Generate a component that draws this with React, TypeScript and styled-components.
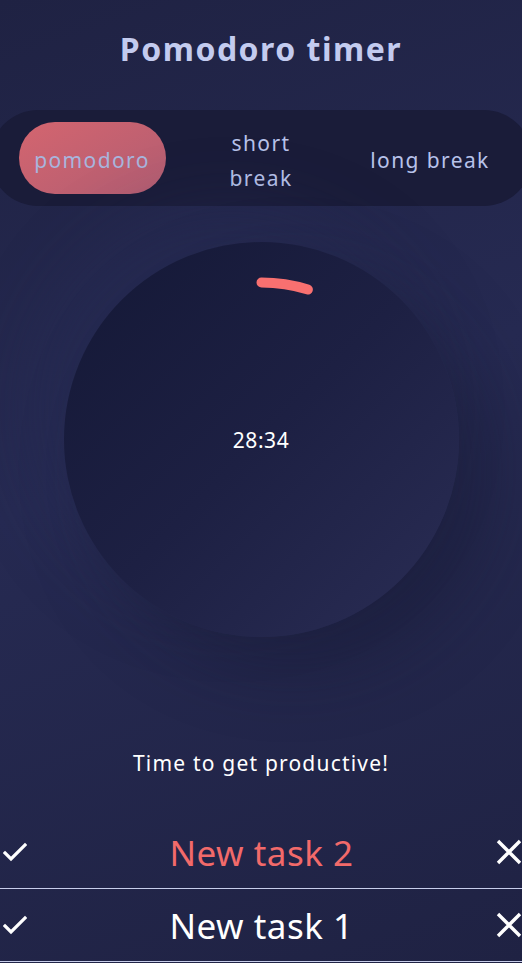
import React from "react";
import styled, { createGlobalStyle } from "styled-components";

const Global = createGlobalStyle`
  html, body { margin: 0; padding: 0; }
  body {
    background: #1f2243;
    min-height: 963px;
    font-family: "Noto Sans", "Noto Sans CJK KR", sans-serif;
    overflow-x: hidden;
  }
`;

const Page = styled.div`
  width: 522px;
  height: 963px;
  display: flex;
  flex-direction: column;
  align-items: center;
  overflow: hidden;
  background: linear-gradient(160deg, #1f2243 0%, #262a52 45%, #1f2243 100%);
`;

const Title = styled.h1`
  margin: 26px 0 0;
  height: 46px;
  font-size: 32px;
  font-weight: 700;
  line-height: 46px;
  color: #c3cbef;
  letter-spacing: 1.5px;
`;

const ModeBar = styled.div`
  margin-top: 38px;
  width: 542px;
  flex-shrink: 0;
  box-sizing: border-box;
  height: 96px;
  padding: 0 17.5px;
  border-radius: 48px;
  background: #1a1c39;
  display: grid;
  grid-template-columns: repeat(3, 1fr);
  align-items: center;
  justify-items: center;
`;

const ModeButton = styled.button<{ $active?: boolean }>`
  width: 147px;
  height: 72px;
  border: none;
  border-radius: 36px;
  padding: 4px 12px 0;
  font-family: inherit;
  font-size: 21px;
  letter-spacing: 1.4px;
  line-height: 35px;
  cursor: pointer;
  color: ${(p) => (p.$active ? "#a8b5dd" : "#b7c2ea")};
  background: ${(p) =>
    p.$active ? "linear-gradient(150deg, #d4656f 0%, #b15d72 100%)" : "transparent"};
`;

const TimerWrap = styled.div`
  margin-top: 36px;
  width: 395px;
  height: 395px;
  flex-shrink: 0;
  border-radius: 50%;
  position: relative;
  display: flex;
  align-items: center;
  justify-content: center;
  background: linear-gradient(135deg, #141836 0%, #1d2043 50%, #2a2d55 100%);
  box-shadow: 30px 30px 70px rgba(20, 22, 46, 0.4), -30px -30px 70px rgba(44, 50, 92, 0.35);
`;

const Ring = styled.svg`
  position: absolute;
  inset: 0;
`;

const Time = styled.span`
  font-size: 21px;
  letter-spacing: 0.6px;
  color: #ffffff;
  position: relative;
`;

const Message = styled.p`
  margin: 111px 0 0;
  font-size: 21px;
  line-height: 30px;
  letter-spacing: 1.2px;
  color: #ffffff;
`;

const TaskList = styled.ul`
  list-style: none;
  margin: 38px 0 0;
  padding: 0;
  width: 100%;
`;

const TaskRow = styled.li`
  height: 72px;
  border-bottom: 1px solid #c7cdea;
  display: flex;
  align-items: center;
  justify-content: space-between;
  padding: 0 0 0 3px;
`;

const TaskName = styled.span<{ $current?: boolean }>`
  font-size: 35px;
  letter-spacing: 0.5px;
  color: ${(p) => (p.$current ? "#f26a6a" : "#ffffff")};
  flex: 1;
  text-align: center;
`;

const IconButton = styled.button`
  border: none;
  background: none;
  padding: 0;
  display: flex;
  align-items: center;
  cursor: pointer;
`;

const Check = () => (
  <svg width="24" height="20" viewBox="0 0 24 20">
    <path d="M2 11 L8 17 L22 3" stroke="#fff" strokeWidth="3.2" fill="none" strokeLinecap="square" />
  </svg>
);

const Cross = () => (
  <svg width="26" height="26" viewBox="0 0 26 26">
    <path d="M2 2 L24 24 M24 2 L2 24" stroke="#fff" strokeWidth="3.4" fill="none" />
  </svg>
);

const R = 157;
const C = 2 * Math.PI * R;

export default function App() {
  const progress = 86 / 1800;
  return (
    <>
      <Global />
      <Page>
        <Title>Pomodoro timer</Title>
        <ModeBar>
          <ModeButton $active>pomodoro</ModeButton>
          <ModeButton>short break</ModeButton>
          <ModeButton>long break</ModeButton>
        </ModeBar>
        <TimerWrap>
          <Ring width="395" height="395" viewBox="0 0 395 395">
            <circle
              cx="197.5"
              cy="197.5"
              r={R}
              fill="none"
              stroke="#f87070"
              strokeWidth="10"
              strokeLinecap="round"
              strokeDasharray={`${C * progress} ${C}`}
              transform="rotate(-90 197.5 197.5)"
            />
          </Ring>
          <Time>28:34</Time>
        </TimerWrap>
        <Message>Time to get productive!</Message>
        <TaskList>
          <TaskRow>
            <IconButton><Check /></IconButton>
            <TaskName $current>New task 2</TaskName>
            <IconButton><Cross /></IconButton>
          </TaskRow>
          <TaskRow>
            <IconButton><Check /></IconButton>
            <TaskName>New task 1</TaskName>
            <IconButton><Cross /></IconButton>
          </TaskRow>
        </TaskList>
      </Page>
    </>
  );
}
